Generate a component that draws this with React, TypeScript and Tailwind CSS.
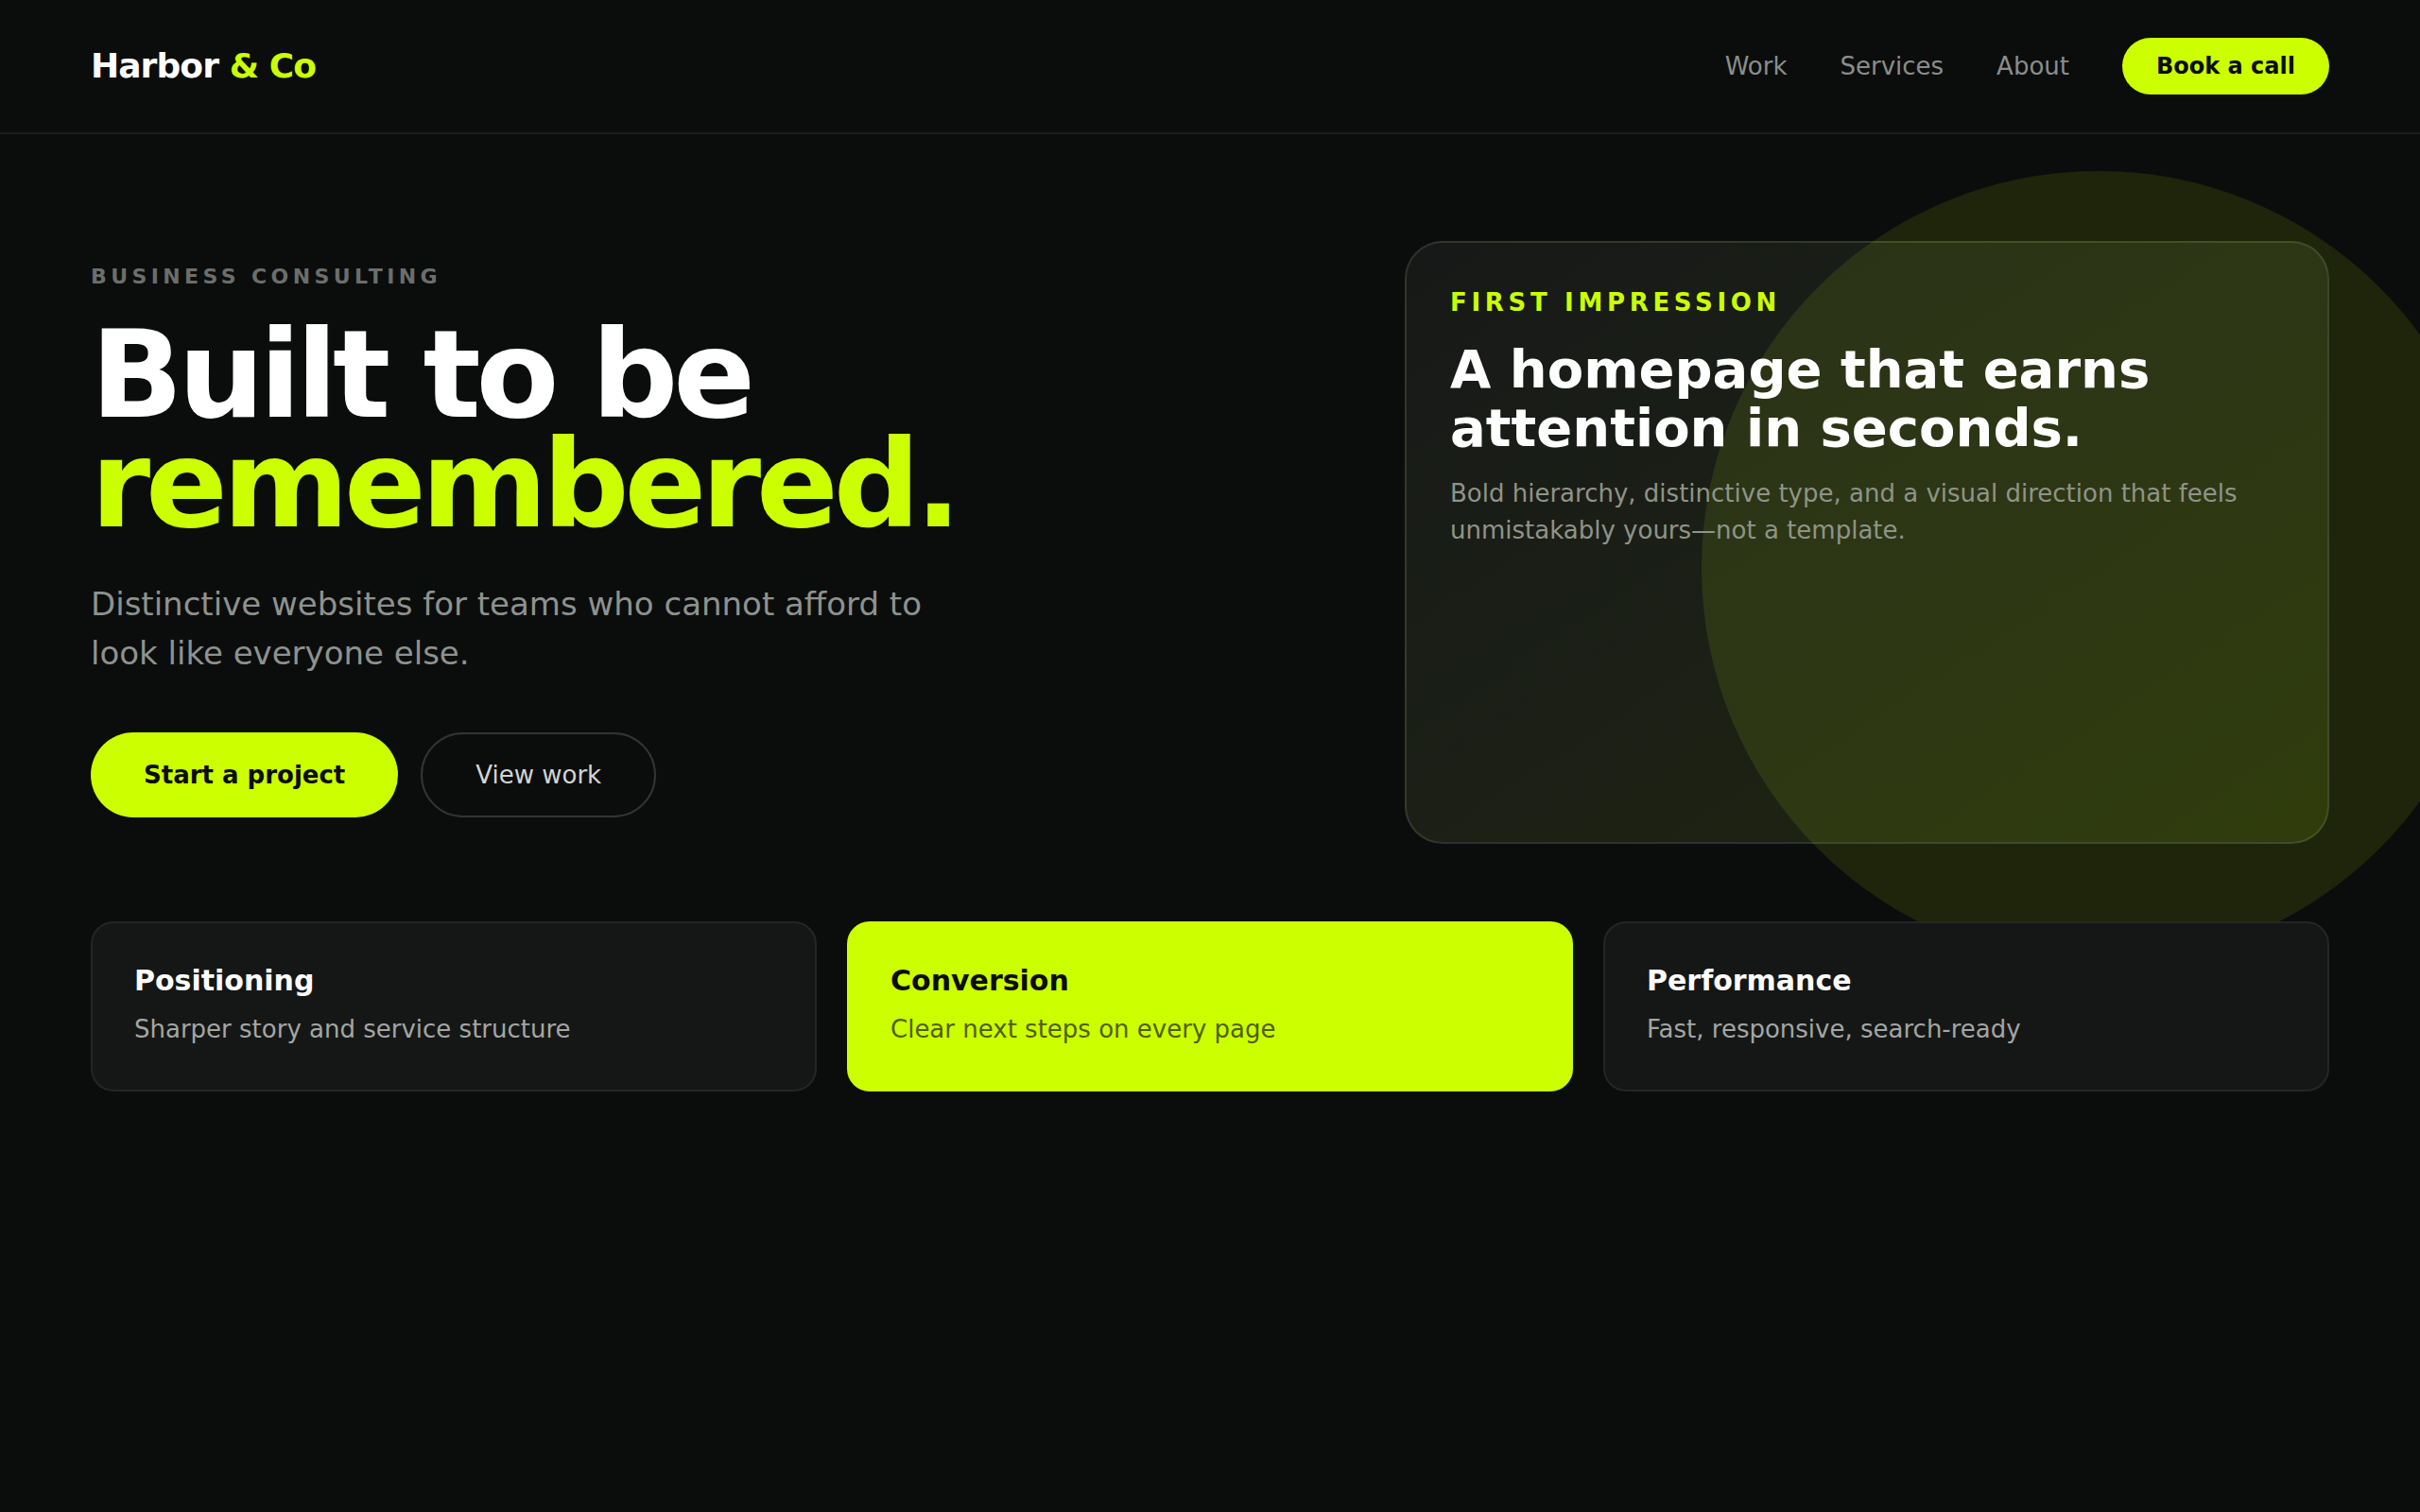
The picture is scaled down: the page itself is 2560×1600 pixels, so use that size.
import React from 'react';

const navLinks = ['Work', 'Services', 'About'];

const features = [
    { title: 'Positioning', text: 'Sharper story and service structure', accent: false },
    { title: 'Conversion', text: 'Clear next steps on every page', accent: true },
    { title: 'Performance', text: 'Fast, responsive, search-ready', accent: false },
];

const App: React.FC = () => {
    return (
        <div className="relative min-h-screen overflow-hidden bg-[#0b0d0c] font-['DejaVu_Sans',sans-serif] text-white">
            {/* glow circle behind the hero card */}
            <div className="pointer-events-none absolute left-[1800px] top-[181px] h-[840px] w-[840px] rounded-full bg-[#ccff00]/10" />

            <header className="relative flex h-[142px] items-center justify-between border-b-2 border-[#1c1e1d] px-24">
                <div className="text-[36px] font-bold tracking-[-0.025em]">
                    Harbor <span className="text-[#ccff00]">&amp; Co</span>
                </div>
                <nav className="flex items-center gap-[56px]">
                    {navLinks.map((link) => (
                        <a key={link} href="#" className="text-[26px] text-[#8a8d8b]">
                            {link}
                        </a>
                    ))}
                    <a
                        href="#"
                        className="flex h-[60px] items-center rounded-full bg-[#ccff00] px-[36px] text-[24px] font-bold text-[#0b0d0c]"
                    >
                        Book a call
                    </a>
                </nav>
            </header>

            <main className="relative px-24 pt-[113px]">
                <section className="flex items-start justify-between">
                    <div className="mt-[21px]">
                        <p className="mb-[30px] text-[22px] font-bold leading-[33px] tracking-[0.2em] text-[#6b6e6c]">
                            BUSINESS CONSULTING
                        </p>
                        <h1 className="text-[128px] font-bold leading-[116px] tracking-[-0.04em]">
                            <span className="block text-white">Built to be</span>
                            <span className="block text-[#ccff00]">remembered.</span>
                        </h1>
                        <p className="mt-[42px] max-w-[930px] text-[34px] leading-[52px] text-[#8e928f]">
                            Distinctive websites for teams who cannot afford to look like everyone else.
                        </p>
                        <div className="mt-[58px] flex gap-6">
                            <a
                                href="#"
                                className="flex h-[90px] items-center rounded-full bg-[#ccff00] px-[56px] text-[26px] font-bold text-[#0b0d0c]"
                            >
                                Start a project
                            </a>
                            <a
                                href="#"
                                className="flex h-[90px] items-center rounded-full border-2 border-[#333534] px-[56px] text-[26px] text-[#d2d4d3]"
                            >
                                View work
                            </a>
                        </div>
                    </div>

                    <div className="min-h-[638px] w-[978px] rounded-[40px] border-2 border-white/10 bg-gradient-to-br from-white/5 to-[#ccff00]/[0.11] px-[46px] pt-[47px]">
                        <p className="text-[26px] font-bold leading-[32px] tracking-[0.18em] text-[#ccff00]">
                            FIRST IMPRESSION
                        </p>
                        <h2 className="mt-[24px] text-[56px] font-bold leading-[1.1]">
                            A homepage that earns
                            <br />
                            attention in seconds.
                        </h2>
                        <p className="mt-[20px] max-w-[860px] text-[26px] leading-[39px] text-[#8f9488]">
                            Bold hierarchy, distinctive type, and a visual direction that feels unmistakably yours—not a template.
                        </p>
                    </div>
                </section>

                <section className="mt-[82px] grid grid-cols-3 gap-8">
                    {features.map((f) => (
                        <div
                            key={f.title}
                            className={`rounded-[24px] border-2 px-[44px] pb-[44px] pt-[43px] ${
                                f.accent ? 'border-[#ccff00] bg-[#ccff00]' : 'border-[#242625] bg-[#151716]'
                            }`}
                        >
                            <h3
                                className={`text-[30px] font-bold leading-[36px] ${
                                    f.accent ? 'text-[#0b0d0c]' : 'text-white'
                                }`}
                            >
                                {f.title}
                            </h3>
                            <p
                                className={`mt-[14px] text-[26px] leading-[39px] ${
                                    f.accent ? 'text-[#4f6000]' : 'text-[#a3a6a4]'
                                }`}
                            >
                                {f.text}
                            </p>
                        </div>
                    ))}
                </section>
            </main>
        </div>
    );
};

export default App;
